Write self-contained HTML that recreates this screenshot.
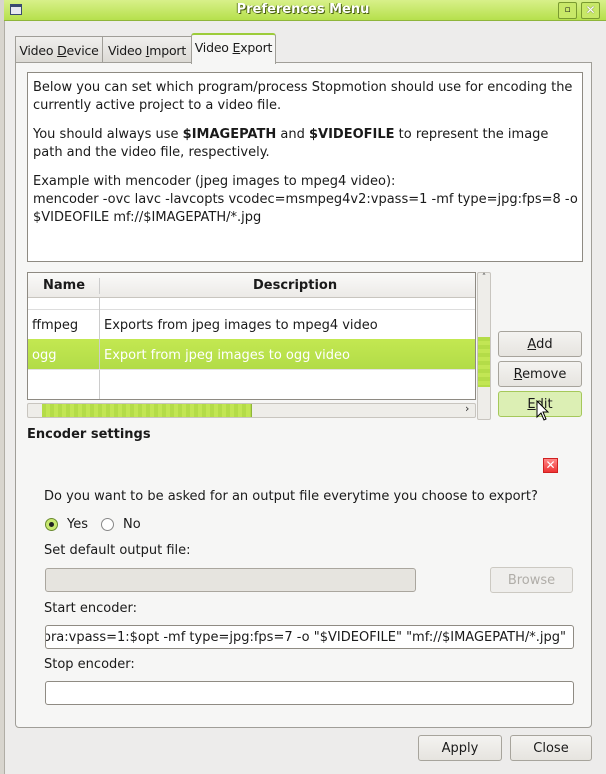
<!DOCTYPE html>
<html><head><style>
*{box-sizing:border-box;margin:0;padding:0}
body{width:606px;height:774px;overflow:hidden;background:#edeceb;font-family:"DejaVu Sans","Liberation Sans",sans-serif;font-size:13px;color:#1a1a1a;position:relative}
.a{position:absolute;white-space:nowrap}
.btn{position:absolute;border:1px solid #a7a49c;border-radius:3px;background:linear-gradient(#f4f3f1,#e6e4df);text-align:center;line-height:25px;font-size:13px;white-space:nowrap}
u{text-decoration:underline}
.field{position:absolute;border:1px solid #8f8b83;border-radius:3px;background:#fff}
.tab{font-size:12.5px;letter-spacing:-0.2px;text-align:center}
</style></head><body>
<div class="a" style="left:0;top:0;width:4px;height:774px;background:#d8d5ce"></div>
<div class="a" style="left:4px;top:0;width:602px;height:774px;background:#edeceb;border-left:1px solid #b0ada5"></div>
<div class="a" style="left:4px;top:0;width:602px;height:21px;background:linear-gradient(#d8f08a,#b6e04c);border-bottom:1px solid #8fb53a"></div>
<div class="a" style="left:10px;top:4px;width:12px;height:11px;border:1px solid #3a4a70;background:#e8e8f0;border-top-width:3px"></div>
<div class="a" style="left:0;top:2px;width:606px;text-align:center;font-weight:bold;font-size:13px;color:#fff;text-shadow:1px 1px 0 #4a6010,-1px 0 0 #6a8a20">Preferences Menu</div>
<div class="a" style="left:558px;top:2px;width:19px;height:17px;border:1px solid #7a9a30;border-radius:2px;background:#c8e868;font-size:9px;text-align:center;line-height:15px">▫</div>
<div class="a" style="left:581px;top:2px;width:19px;height:17px;border:1px solid #7a9a30;border-radius:2px;background:#c8e868;font-size:12px;font-weight:bold;text-align:center;line-height:15px;color:#fff;text-shadow:0 0 1px #333">✕</div>

<div class="a tab" style="left:15px;top:36px;width:88px;height:27px;border:1px solid #a09e98;background:linear-gradient(#f0efed,#dcdad5);padding-top:6px">Video <u>D</u>evice</div>
<div class="a tab" style="left:102px;top:36px;width:90px;height:27px;border:1px solid #a09e98;background:linear-gradient(#f0efed,#dcdad5);padding-top:6px">Video <u>I</u>mport</div>
<div class="a" style="left:15px;top:62px;width:577px;height:666px;border:1px solid #a09e98;border-radius:0 0 4px 4px;background:#f6f6f5"></div>
<div class="a tab" style="left:191px;top:33px;width:85px;height:31px;border:1px solid #a09e98;border-top:2px solid #9ccc3a;border-bottom:none;background:#f6f6f5;padding-top:5px;border-radius:3px 3px 0 0">Video <u>E</u>xport</div>

<div class="a" style="left:27px;top:72px;width:556px;height:190px;background:#fff;border:1px solid #8e8a82;padding:6px 0 0 5px;line-height:18px;white-space:normal">
<div>Below you can set which program/process Stopmotion should use for encoding the currently active project to a video file.</div>
<div style="margin-top:11px">You should always use <b>$IMAGEPATH</b> and <b>$VIDEOFILE</b> to represent the image path and the video file, respectively.</div>
<div style="margin-top:11px">Example with mencoder (jpeg images to mpeg4 video):<br>mencoder -ovc lavc -lavcopts vcodec=msmpeg4v2:vpass=1 -mf type=jpg:fps=8 -o $VIDEOFILE mf://$IMAGEPATH/*.jpg</div>
</div>

<div class="a" style="left:27px;top:272px;width:449px;height:128px;background:#fff;border:1px solid #8e8a82;overflow:hidden">
<div class="a" style="left:0;top:0;width:447px;height:25px;background:linear-gradient(#fafaf9,#eceae7);border-bottom:1px solid #c8c5bf;font-weight:bold;line-height:26px">
<span class="a" style="left:15px">Name</span><span class="a" style="left:225px">Description</span>
<div class="a" style="left:71px;top:5px;width:1px;height:16px;background:#ccc"></div></div>
<div class="a" style="left:0;top:36px;width:447px;height:1px;background:#ddd"></div>
<div class="a" style="left:0;top:66px;width:447px;height:30px;background:linear-gradient(#c3e851,#b2dc48)"></div>
<div class="a" style="left:71px;top:25px;width:1px;height:103px;background:#ccc"></div>
<div class="a" style="left:4px;top:45px">ffmpeg</div>
<div class="a" style="left:76px;top:45px">Exports from jpeg images to mpeg4 video</div>
<div class="a" style="left:4px;top:75px;color:#fff">ogg</div>
<div class="a" style="left:76px;top:75px;color:#fff">Export from jpeg images to ogg video</div>
<div class="a" style="left:0;top:96px;width:447px;height:1px;background:#e2e2e2"></div>
</div>
<div class="a" style="left:477px;top:272px;width:14px;height:148px;border:1px solid #c8c5bf;border-radius:2px;background:#eeede9;font-size:9px;text-align:center;color:#555">˄</div>
<div class="a" style="left:478px;top:337px;width:12px;height:50px;background:repeating-linear-gradient(#b4dc48 0 4px,#c2e654 4px 8px)"></div>
<div class="a" style="left:27px;top:403px;width:449px;height:15px;border:1px solid #c8c5bf;border-radius:2px;background:#eeede9"></div>
<div class="a" style="left:42px;top:404px;width:210px;height:13px;background:repeating-linear-gradient(90deg,#b4dc48 0 4px,#c2e654 4px 8px);border-right:1px solid #8fb53a"></div>
<div class="a" style="left:465px;top:402px;font-size:11px;color:#333">›</div>

<div class="btn" style="left:498px;top:331px;width:84px;height:26px"><u>A</u>dd</div>
<div class="btn" style="left:498px;top:361px;width:84px;height:26px"><u>R</u>emove</div>
<div class="btn" style="left:498px;top:391px;width:84px;height:26px;background:#dcefb4;border-color:#a5c85a"><u>E</u>dit</div>
<svg class="a" style="left:536px;top:400px" width="14" height="22" viewBox="0 0 14 22"><path d="M1 1 L1 17 L5 13 L8 20 L10 19 L7 12 L12 12 Z" fill="#fff" stroke="#000" stroke-width="1"/></svg>

<div class="a" style="left:27px;top:427px;font-weight:bold">Encoder settings</div>
<div class="a" style="left:543px;top:458px;width:15px;height:15px;border:1px solid #d02020;color:#fff;font-size:12px;font-weight:bold;line-height:13px;text-align:center;background:linear-gradient(#f88,#e33)">✕</div>

<div class="a" style="left:44px;top:489px">Do you want to be asked for an output file everytime you choose to export?</div>
<div class="a" style="left:45px;top:518px;width:13px;height:13px;border-radius:50%;border:1px solid #6a8a30;background:#c8e870"><div class="a" style="left:3px;top:3px;width:5px;height:5px;border-radius:50%;background:#222"></div></div>
<div class="a" style="left:67px;top:517px">Yes</div>
<div class="a" style="left:101px;top:518px;width:13px;height:13px;border-radius:50%;border:1px solid #888;background:#fff"></div>
<div class="a" style="left:123px;top:517px">No</div>
<div class="a" style="left:44px;top:543px">Set default output file:</div>
<div class="a" style="left:45px;top:568px;width:371px;height:24px;border:1px solid #aaa69e;border-radius:3px;background:#e6e4df"></div>
<div class="btn" style="left:490px;top:567px;width:83px;height:26px;color:#b0ada8;border-color:#ccc9c2;background:#efeeec">Browse</div>
<div class="a" style="left:44px;top:601px">Start encoder:</div>
<div class="field" style="left:45px;top:625px;width:529px;height:24px;line-height:24px;overflow:hidden;white-space:nowrap"><span style="margin-left:-3px">ora:vpass=1:$opt -mf type=jpg:fps=7 -o "$VIDEOFILE" "mf://$IMAGEPATH/*.jpg"</span></div>
<div class="a" style="left:44px;top:657px">Stop encoder:</div>
<div class="field" style="left:45px;top:681px;width:529px;height:24px"></div>

<div class="btn" style="left:418px;top:735px;width:84px;height:26px">Apply</div>
<div class="btn" style="left:510px;top:735px;width:82px;height:26px">Close</div>
</body></html>
